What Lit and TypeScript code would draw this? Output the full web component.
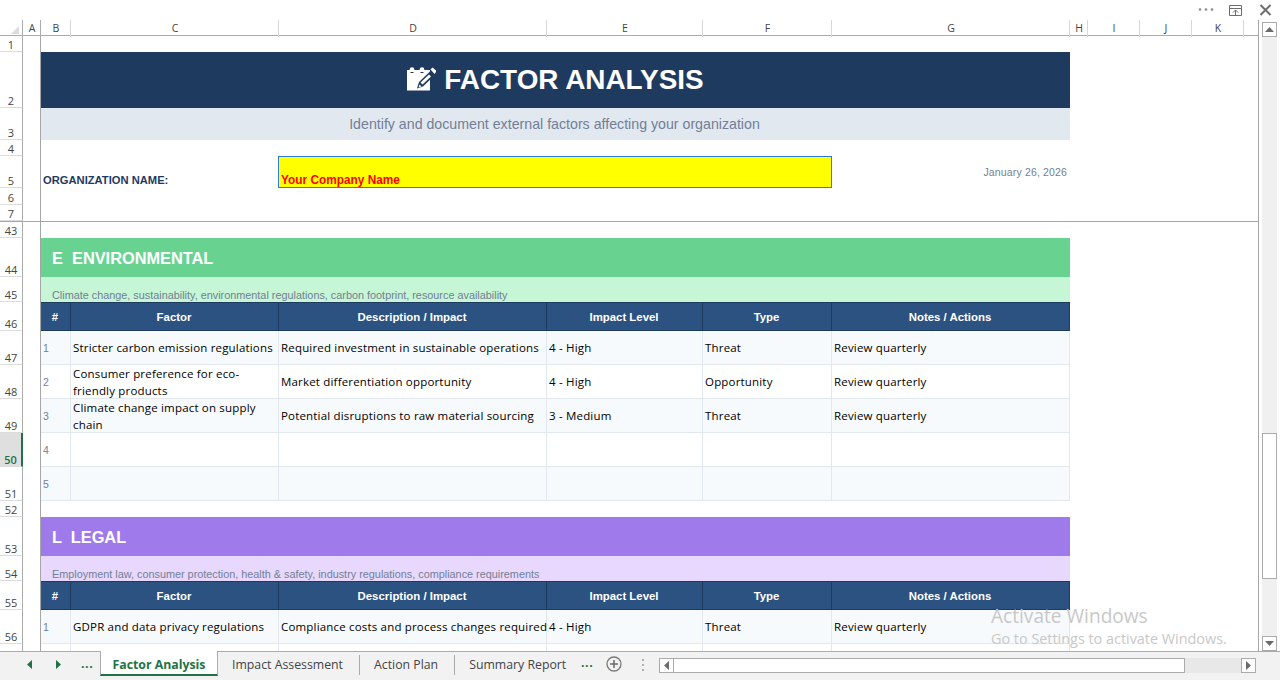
import { LitElement, html, css, svg } from "lit";
import { customElement } from "lit/decorators.js";

const COLS = ["", "A", "B", "C", "D", "E", "F", "G", "H", "I", "J", "K"];
const HEADS = ["#", "Factor", "Description / Impact", "Impact Level", "Type", "Notes / Actions"];

type Row = { n: string; f?: string; d?: string; i?: string; t?: string; note?: string };

const ENV: Row[] = [
  { n: "1", f: "Stricter carbon emission regulations", d: "Required investment in sustainable operations", i: "4 - High", t: "Threat", note: "Review quarterly" },
  { n: "2", f: "Consumer preference for eco-friendly products", d: "Market differentiation opportunity", i: "4 - High", t: "Opportunity", note: "Review quarterly" },
  { n: "3", f: "Climate change impact on supply chain", d: "Potential disruptions to raw material sourcing", i: "3 - Medium", t: "Threat", note: "Review quarterly" },
  { n: "4" },
  { n: "5" },
];

@customElement("app-root")
export class AppRoot extends LitElement {
  static styles = css`
    :host { display: block; width: 1280px; height: 680px; overflow: hidden; background: #fff; font-family: "Liberation Sans", Arial, sans-serif; position: relative; }
    .top { height: 20px; display: flex; align-items: center; justify-content: flex-end; padding-right: 8px; background: #fff; }
    .top svg { display: block; }
    .main { height: 631px; display: flex; background: #fff; }
    .sheet { width: 1259px; box-sizing: border-box; border-right: 1px solid #a6a6a6; overflow: hidden; flex: none; }
    .vs { width: 15px; margin-left: 3px; height: 629px; margin-top: 2px; background: #f0f0f0; display: flex; flex-direction: column; position: relative; }
    .sb { width: 15px; height: 15px; box-sizing: border-box; border: 1px solid #ababab; background: #fff; display: flex; align-items: center; justify-content: center; flex: none; }
    .vs .grow { flex: 1; padding-top: 396px; }
    .vthumb { box-sizing: border-box; height: 146px; background: #fff; border: 1px solid #ababab; }

    .colhead { height: 16px; display: grid; grid-template-columns: 23px 18px 30px 208px 268px 156px 129px 238px 18px 52px 52px 52px 1fr; box-sizing: border-box; border-bottom: 1px solid #ababab; font: 10.5px/17px "Open Sans", sans-serif; color: #444; }
    .colhead > div { border-right: 1px solid #d8d8d8; text-align: center; position: relative; padding-left: 1px; }
    .colhead > div:first-child, .colhead > div:nth-child(2) { border-right-color: #ababab; }
    .colhead > div:last-child { border-right: none; }
    .corner { width: 0; height: 0; border-style: solid; border-width: 0 0 8px 8px; border-color: transparent transparent #dcdcdc transparent; position: absolute; right: 3px; bottom: 3px; }

    .row { display: grid; grid-template-columns: 23px 18px 30px 208px 268px 156px 129px 238px 1fr; grid-template-rows: minmax(0, 1fr); box-sizing: border-box; }
    .rh { border-right: 1px solid #ababab; border-bottom: 1px solid #dcdcdc; box-sizing: border-box; font: 11px/12px "Open Sans", sans-serif; color: #444; text-align: center; display: flex; align-items: flex-end; justify-content: center; }
    .rh.sel { background: #dfdfdf; color: #217346; font-weight: 600; border-right: 2px solid #217346; }
    .a { border-right: 1px solid #a6a6a6; background: #fff; }
    .span { grid-column: 3 / 9; min-width: 0; }
    .freeze { border-bottom: 1px solid #a6a6a6; }

    .title { background: #1e3a5f; color: #fff; font-weight: 700; font-size: 27.9px; display: flex; align-items: center; justify-content: center; gap: 8px; height: 100%; }
    .title svg { display: block; margin-bottom: 3px; }
    .subtitle { background: #e2e8f0; color: #718096; font-size: 14.2px; height: 100%; display: flex; align-items: center; justify-content: center; box-sizing: border-box; padding-right: 2px; }
    .label { grid-column: 3 / 5; font-size: 11.2px; font-weight: 700; color: #1e3a5f; align-self: end; padding: 0 0 1px 2px; line-height: 13px; }
    .company { background: #ff0; border: 1px solid #2b7cd3; box-sizing: border-box; grid-column: 5 / 7; margin-left: -1px; color: #f00; font-size: 11.85px; font-weight: 700; display: flex; align-items: flex-end; padding: 0 0 0 2px; width: 554px; line-height: 13px; }
    .date { grid-column: 8; font-size: 10.5px; color: #718096; text-align: right; padding: 10px 3px 0 0; letter-spacing: .15px; }

    .sect { color: #fff; font-weight: 700; font-size: 16.35px; display: flex; align-items: center; height: 100%; padding: 2px 0 0 11px; white-space: pre; box-sizing: border-box; }
    .desc { color: #718096; font-size: 10.85px; height: 100%; display: flex; align-items: flex-end; padding: 0 0 0 11px; box-sizing: border-box; line-height: 13px; }
    .green { background: #68d391; }
    .lgreen { background: #c6f6d5; }
    .purple { background: #9f7aea; }
    .lpurple { background: #e9d8fd; }

    .th { background: #2c5282; color: #fff; font-size: 11.4px; font-weight: 700; display: flex; align-items: center; justify-content: center; border-right: 1px solid #1e3a5f; border-top: 1px solid #1e3a5f; border-bottom: 1px solid #1e3a5f; box-sizing: border-box; padding: 1px 1px 0 0; }
    .td { border-right: 1px solid #e2e8f0; border-bottom: 1px solid #e2e8f0; box-sizing: border-box; font: 11.5px/17px "Open Sans", sans-serif; letter-spacing: .18px; color: #000; display: flex; align-items: center; padding: 0 2px; min-width: 0; white-space: nowrap; }
    .td.wrap { white-space: normal; }
    .td.num { font-family: "Liberation Sans", sans-serif; color: #718096; font-size: 10.5px; letter-spacing: 0; padding-top: 1px; }
    .alt { background: #f7fafc; }

    .tabs { height: 29px; box-sizing: border-box; border-top: 1px solid #ababab; background: #f2f2f2; display: flex; align-items: flex-start; position: relative; font: 12.3px "Open Sans", sans-serif; color: #444; }
    .nav { width: 100px; height: 24px; display: flex; align-items: center; flex: none; box-sizing: border-box; padding-left: 27px; gap: 24px; color: #217346; }
    .dots { font-weight: 700; color: #217346; line-height: 20px; letter-spacing: .5px; font-size: 12.5px; }
    .nav .dots { margin-left: -4px; }
    .tab { height: 24px; display: flex; align-items: center; box-sizing: border-box; white-space: nowrap; flex: none; }
    .tab.active { width: 118px; justify-content: center; background: #fff; color: #217346; font-weight: 700; border-left: 1px solid #ababab; border-right: 1px solid #ababab; border-bottom: 2px solid #217346; margin-top: -1px; height: 25px; padding-top: 3px; }
    .tab.p { padding: 0 16px 0 14px; }
    .sep { width: 1px; height: 20px; background: #ababab; margin-top: 3px; flex: none; }
    .hs { position: absolute; left: 659px; top: 6px; width: 597px; height: 15px; display: flex; background: #e8e8e8; }
    .hthumb { width: 511px; box-sizing: border-box; background: #fff; border: 1px solid #ababab; border-left: none; height: 15px; }
    .spacer { flex: 1; }
    .plus { position: absolute; left: 606px; top: 4px; display: block; }
    .more { position: absolute; left: 581px; top: 1px; }
    .vdots { position: absolute; left: 642px; top: 7px; display: block; }
    .wm { position: absolute; left: 991px; top: 604px; color: #c8c8c8; font-family: "Open Sans", sans-serif; pointer-events: none; }
    .wm .l1 { font-size: 19.1px; line-height: 24px; }
    .wm .l2 { font-size: 14.4px; line-height: 20px; margin-top: 1px; }
  `;

  private rowhead(n: string, sel = false) {
    return html`<div class="rh ${sel ? "sel" : ""}">${n}</div>`;
  }

  private plain(n: string, h: number, content: unknown = html`<div class="span"></div>`, cls = "") {
    return html`<div class="row ${cls}" style="height:${h}px">${this.rowhead(n)}<div class="a"></div>${content}</div>`;
  }

  private header(n: string) {
    return html`<div class="row" style="height:29px">${this.rowhead(n)}<div class="a"></div>
      ${HEADS.map((t) => html`<div class="th">${t}</div>`)}<div></div></div>`;
  }

  private data(r: Row, n: string, alt: boolean, sel = false) {
    const c = alt ? "alt" : "";
    return html`<div class="row" style="height:34px">${this.rowhead(n, sel)}<div class="a"></div>
      <div class="td num ${c}">${r.n}</div>
      <div class="td wrap ${c}"><span>${r.f}</span></div>
      <div class="td ${c}">${r.d}</div>
      <div class="td ${c}">${r.i}</div>
      <div class="td ${c}">${r.t}</div>
      <div class="td ${c}">${r.note}</div><div></div></div>`;
  }

  private noteIcon() {
    return svg`<svg width="29" height="24" viewBox="0 0 29 24" fill="none">
      <path d="M0 3h23v20.500H0z" fill="#fff"/>
      <circle cx="5" cy="2.500" r="2.300" fill="#fff"/><circle cx="15" cy="2.500" r="2.300" fill="#fff"/>
      <path d="M3.500 5.500h3M13.500 5.500h3" stroke="#1e3a5f" stroke-width="1"/>
      <path d="M10 21.500L12 15L24 3.500L28 8L16 19.500Z" fill="#1e3a5f"/>
      <path d="M13.500 15.500L22 7.500L24 9.500L15.500 17.500Z" fill="#fff"/>
      <path d="M23.500 2.500L25.500 0.500L29 3.500L29 5L27.500 7Z" fill="#fff"/>
      <path d="M11.500 20.500L12.500 17.500L14.500 19.500Z" fill="#fff"/>
    </svg>`;
  }

  private arrow(dir: "u" | "d" | "l" | "r", col = "#6b6b6b") {
    const p = { u: "M0 5L4.500 0L9 5z", d: "M0 0L4.500 5L9 0z", l: "M5 0L0 4.500L5 9z", r: "M0 0L5 4.500L0 9z" }[dir];
    const vert = dir === "u" || dir === "d";
    return svg`<svg width="${vert ? 9 : 5}" height="${vert ? 5 : 9}" viewBox="0 0 ${vert ? 9 : 5} ${vert ? 5 : 9}"><path d="${p}" fill="${col}"/></svg>`;
  }

  render() {
    return html`
      <div class="top">
        <svg width="74" height="20" viewBox="0 0 74 20">
          <g fill="#8a8a8a"><circle cx="2" cy="9.500" r="1.300"/><circle cx="8" cy="9.500" r="1.300"/><circle cx="14" cy="9.500" r="1.300"/></g>
          <path d="M31.500 5.500h12v10h-12zM31.500 8.500h12" fill="none" stroke="#6e6e6e"/>
          <path d="M37.500 15v-5M35 12.500l2.500-2.500l2.500 2.500" fill="none" stroke="#6e6e6e"/>
          <path d="M62.500 5l10 10M72.500 5l-10 10" stroke="#6e6e6e" stroke-width="2" fill="none"/>
        </svg>
      </div>
      <div class="main">
        <div class="sheet">
          <div class="colhead">
            ${COLS.map((c, i) => html`<div>${i === 0 ? html`<span class="corner"></span>` : c}</div>`)}
            <div></div>
          </div>
          ${this.plain("1", 16)}
          ${this.plain("2", 56, html`<div class="span"><div class="title">${this.noteIcon()}<span>FACTOR ANALYSIS</span></div></div>`)}
          ${this.plain("3", 32, html`<div class="span"><div class="subtitle">Identify and document external factors affecting your organization</div></div>`)}
          ${this.plain("4", 16)}
          ${this.plain("5", 32, html`<div class="label">ORGANIZATION NAME:</div><div class="company">Your Company Name</div><div class="date">January 26, 2026</div>`)}
          ${this.plain("6", 17)}
          ${this.plain("7", 17, html`<div class="span"></div>`, "freeze")}
          ${this.plain("43", 16)}
          ${this.plain("44", 39, html`<div class="span green"><div class="sect">E  ENVIRONMENTAL</div></div>`)}
          ${this.plain("45", 25, html`<div class="span lgreen"><div class="desc">Climate change, sustainability, environmental regulations, carbon footprint, resource availability</div></div>`)}
          ${this.header("46")}
          ${ENV.map((r, i) => this.data(r, String(47 + i), i % 2 === 0, i === 3))}
          ${this.plain("52", 16)}
          ${this.plain("53", 39, html`<div class="span purple"><div class="sect">L  LEGAL</div></div>`)}
          ${this.plain("54", 25, html`<div class="span lpurple"><div class="desc">Employment law, consumer protection, health &amp; safety, industry regulations, compliance requirements</div></div>`)}
          ${this.header("55")}
          ${this.data({ n: "1", f: "GDPR and data privacy regulations", d: "Compliance costs and process changes required", i: "4 - High", t: "Threat", note: "Review quarterly" }, "56", true)}
          ${this.data({ n: "" }, "", false)}
        </div>
        <div class="vs">
          <div class="sb">${this.arrow("u")}</div>
          <div class="grow"><div class="vthumb"></div></div>
          <div class="sb">${this.arrow("d")}</div>
        </div>
      </div>
      <div class="tabs">
        <div class="nav">
          ${this.arrow("l", "#217346")}${this.arrow("r", "#217346")}
          <span class="dots">...</span>
        </div>
        <div class="tab active">Factor Analysis</div>
        <div class="tab p">Impact Assessment</div><div class="sep"></div>
        <div class="tab p">Action Plan</div><div class="sep"></div>
        <div class="tab p">Summary Report</div>
        <span class="dots more">...</span>
        <svg class="plus" width="16" height="16" viewBox="0 0 16 16"><circle cx="8" cy="8" r="7" fill="none" stroke="#7a7a7a" stroke-width="1.300"/><path d="M8 4v8M4 8h8" stroke="#6a6a6a" stroke-width="1.500"/></svg>
        <svg class="vdots" width="3" height="12" viewBox="0 0 3 12"><g fill="#b0b0b0"><rect y="0" width="2" height="2"/><rect y="5" width="2" height="2"/><rect y="10" width="2" height="2"/></g></svg>
        <div class="hs">
          <div class="sb">${this.arrow("l")}</div>
          <div class="hthumb"></div>
          <div class="spacer"></div>
          <div class="sb">${this.arrow("r")}</div>
        </div>
      </div>
      <div class="wm"><div class="l1">Activate Windows</div><div class="l2">Go to Settings to activate Windows.</div></div>
    `;
  }
}
